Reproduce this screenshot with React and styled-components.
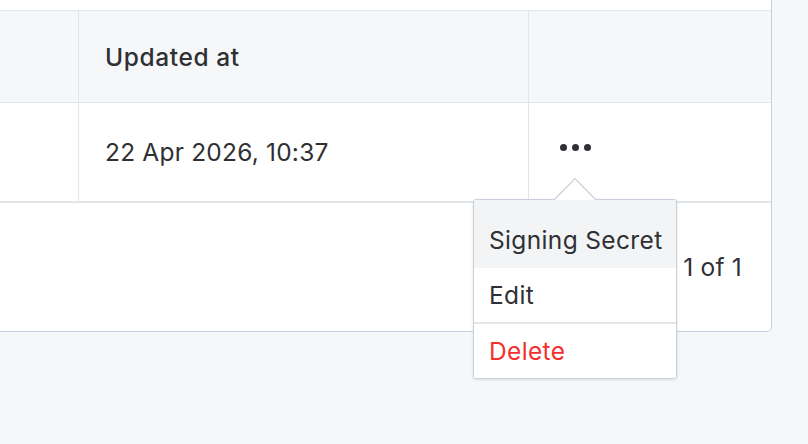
import React from "react";
import styled, { createGlobalStyle } from "styled-components";

const Global = createGlobalStyle`
  html, body { margin: 0; padding: 0; background: #f6f7f9; }
  body { font-family: Inter, "Noto Sans", sans-serif; color: #2f3033; }
  * { box-sizing: border-box; }
`;

const Page = styled.div`
  width: 808px;
  height: 444px;
  overflow: hidden;
  background: #f6f7f9;
`;

const Card = styled.div`
  width: 772px;
  background: #fff;
  padding-top: 10px;
  border-right: 1px solid #c9d0db;
  border-bottom: 1px solid #c9d0db;
  border-bottom-right-radius: 5px;
`;

const Row = styled.div`
  display: grid;
  grid-template-columns: 78px 450px 1fr;
  height: ${(p) => p.$h}px;
  background: ${(p) => (p.$head ? "#f6f7f9" : "#fff")};
  border-top: ${(p) => (p.$head ? "1px solid #e2e5ea" : "none")};
  border-bottom: ${(p) => p.$bb}px solid #e2e5ea;
`;

const Cell = styled.div`
  display: flex;
  align-items: center;
  padding-left: 26px;
  font-size: 24.5px;
  font-weight: ${(p) => (p.$bold ? 500 : 400)};
  letter-spacing: ${(p) => (p.$bold ? "0.6px" : "0.2px")};
  border-left: ${(p) => (p.$first ? "none" : "1px solid #e2e5ea")};
  position: relative;
`;

const Footer = styled.div`
  height: 128px;
  display: flex;
  align-items: center;
  justify-content: flex-end;
  padding-right: 29px;
  font-size: 24.5px;
  letter-spacing: 0.2px;
`;

const Dots = styled.div`
  display: flex;
  gap: 5px;
  margin-top: -9px;
  margin-left: 5px;
`;

const Dot = styled.span`
  width: 7px;
  height: 7px;
  border-radius: 50%;
  background: #2f3033;
`;

const Caret = styled.svg`
  position: absolute;
  left: 24px;
  top: 74px;
  z-index: 3;
`;

const Menu = styled.div`
  position: absolute;
  left: -56px;
  top: 96px;
  width: 204px;
  background: #fff;
  border: 1px solid #c9d0db;
  border-radius: 3px;
  box-shadow: 0 1px 3px rgba(30, 40, 60, 0.12);
  z-index: 2;
  overflow: hidden;
`;

const Item = styled.div`
  padding: ${(p) => (p.$top ? "26px 15px 14px" : p.$sep ? "13px 15px 13px" : "13px 15px 13px")};
  font-size: 24.5px;
  line-height: 28px;
  letter-spacing: 0.35px;
  color: ${(p) => (p.$danger ? "#f4302f" : "#2f3033")};
  background: ${(p) => (p.$active ? "#f3f4f6" : "#fff")};
  border-top: ${(p) => (p.$sep ? "2px solid #e2e5ea" : "none")};
  white-space: nowrap;
`;

export default function App() {
  return (
    <Page>
      <Global />
      <Card>
        <Row $head $h={93} $bb={1}>
          <Cell $first />
          <Cell $bold>Updated at</Cell>
          <Cell />
        </Row>
        <Row $h={100} $bb={2}>
          <Cell $first />
          <Cell>22 Apr 2026, 10:37</Cell>
          <Cell>
            <Dots>
              <Dot />
              <Dot />
              <Dot />
            </Dots>
            <Caret width="44" height="24" viewBox="0 0 44 24">
              <path d="M1 23 L22 1.5 L43 23" fill="#fff" stroke="#c9d0db" strokeWidth="1.2" />
            </Caret>
            <Menu>
              <Item $top $active>Signing Secret</Item>
              <Item>Edit</Item>
              <Item $sep $danger>Delete</Item>
            </Menu>
          </Cell>
        </Row>
        <Footer>1 of 1</Footer>
      </Card>
    </Page>
  );
}
